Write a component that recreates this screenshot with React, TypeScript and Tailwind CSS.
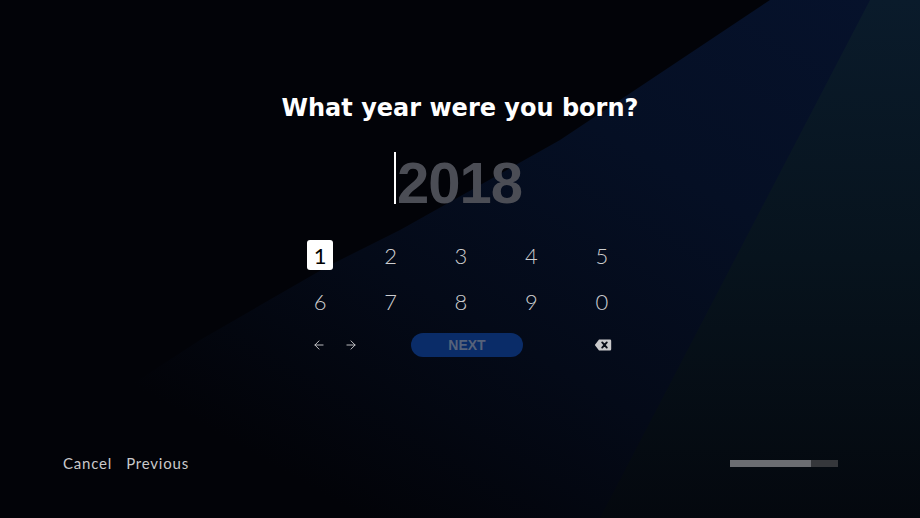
import { ArrowLeft, ArrowRight } from "lucide-react";

const keys = ["1", "2", "3", "4", "5", "6", "7", "8", "9", "0"];

function BackspaceIcon() {
  return (
    <svg width="18" height="14" viewBox="0 0 18 14">
      <path
        d="M5 1.5 H16 a1.2 1.2 0 0 1 1.2 1.2 V11.3 a1.2 1.2 0 0 1 -1.2 1.2 H5 L0.8 7 Z"
        fill="#c9c9cb"
      />
      <path
        d="M8.2 4.4 L12.8 9.6 M12.8 4.4 L8.2 9.6"
        stroke="#0a0e18"
        strokeWidth="1.9"
        strokeLinecap="round"
      />
    </svg>
  );
}

export default function App() {
  return (
    <div className="relative h-[518px] w-[920px] overflow-hidden bg-[#020308] font-['Lato','Liberation_Sans',sans-serif]">
      {/* light beams */}
      <div className="absolute inset-0 bg-[linear-gradient(210deg,#06122c_0%,#050f24_30%,#040a18_55%,#020308_80%)] [clip-path:polygon(770px_0,620px_100px,560px_140px,400px_230px,330px_265px,200px_340px,0_470px,0_518px,920px_518px,920px_0)]" />
      <div className="absolute inset-0 bg-[linear-gradient(180deg,#0a1b2b_0%,#07131d_50%,#04080e_100%)] [clip-path:polygon(870px_0,920px_0,920px_518px,600px_518px)]" />

      <div className="relative flex h-full flex-col items-center">
        <h1 className="pt-[92px] font-['DejaVu_Sans',sans-serif] text-[24px] font-bold leading-[32px] text-white">
          What year were you born?
        </h1>

        <div className="mr-[4px] mt-[28px] flex items-start">
          <div className="h-[52px] w-[2px] bg-white" />
          <span className="ml-[1px] mt-[5px] font-['Liberation_Sans',sans-serif] text-[58px] font-bold leading-[52px] tracking-[-1px] text-[#4b4d55]">
            2018
          </span>
        </div>

        <div className="mt-[23px] ml-[2px] grid w-[352px] grid-cols-5">
          {keys.map((k, i) => (
            <div key={k} className="flex h-[46px] items-center justify-center">
              {i === 0 ? (
                <span className="flex h-[30px] w-[26px] items-center justify-center rounded-[3px] bg-white text-[22px] text-black">
                  {k}
                </span>
              ) : (
                <span className="text-[22px] font-light text-[#cdcdcf]">{k}</span>
              )}
            </div>
          ))}
        </div>

        <div className="ml-[2px] flex h-[42px] w-[352px] items-center">
          <div className="ml-[27px] flex items-center gap-[18px] text-[#c9c9cb]">
            <ArrowLeft size={14} strokeWidth={1.6} />
            <ArrowRight size={14} strokeWidth={1.6} />
          </div>
          <button className="ml-[53px] flex h-[24px] w-[112px] items-center justify-center rounded-full bg-[#0a2c68] font-['Liberation_Sans',sans-serif] text-[14px] font-bold text-[#56627a]">
            NEXT
          </button>
          <div className="ml-[71px] flex">
            <BackspaceIcon />
          </div>
        </div>

        <div className="mt-auto flex w-full items-center justify-between pb-[45px] pl-[63px] pr-[82px]">
          <div className="flex h-[20px] items-center gap-[14px] text-[15px] tracking-[0.8px] text-[#c9c9cb]">
            <span>Cancel</span>
            <span>Previous</span>
          </div>
          <div className="flex h-[7px] w-[108px]">
            <div className="h-full w-[81px] bg-[#6b6d72]" />
            <div className="h-full flex-1 bg-[#35373b]" />
          </div>
        </div>
      </div>
    </div>
  );
}
